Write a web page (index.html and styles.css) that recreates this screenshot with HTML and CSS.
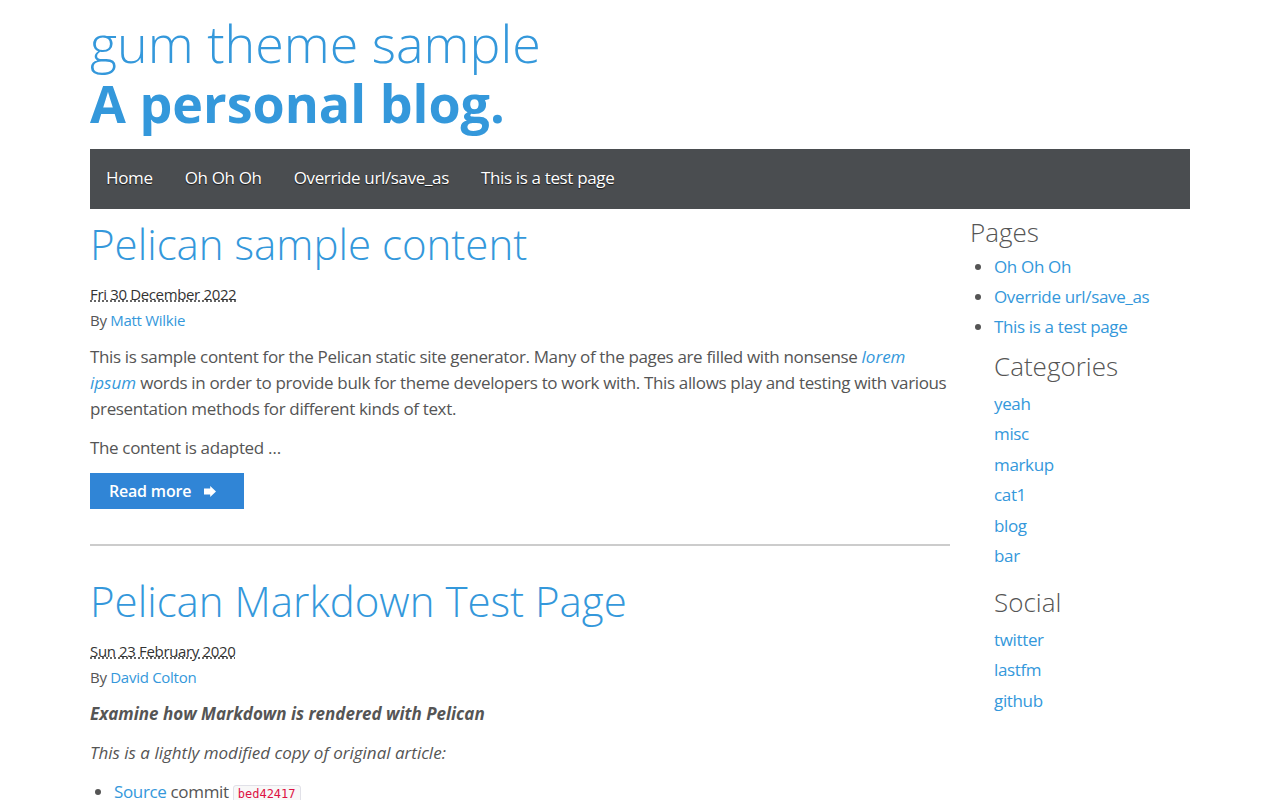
FILE: index.html
```html
<!DOCTYPE html>
<html>
<head>
<meta charset="utf-8">
<title>gum theme sample</title>
<link rel="stylesheet" href="styles.css">
</head>
<body>
<div class="container">
  <header class="site-header">
    <h1 class="site-title"><a href="#">gum theme sample</a></h1>
    <h2 class="site-tagline"><a href="#">A personal blog.</a></h2>
  </header>
  <nav class="navbar">
    <a href="#">Home</a>
    <a href="#">Oh Oh Oh</a>
    <a href="#">Override url/save_as</a>
    <a href="#">This is a test page</a>
  </nav>
  <div class="layout">
    <main class="main">
      <article class="post">
        <h2 class="post-title"><a href="#">Pelican sample content</a></h2>
        <div class="meta"><abbr title="2022-12-30">Fri 30 December 2022</abbr></div>
        <div class="byline">By <a href="#">Matt Wilkie</a></div>
        <p>This is sample content for the Pelican static site generator. Many of the pages are filled with nonsense <a href="#"><em>lorem ipsum</em></a> words in order to provide bulk for theme developers to work with. This allows play and testing with various presentation methods for different kinds of text.</p>
        <p>The content is adapted …</p>
        <a class="btn" href="#">Read more <svg class="arrow" width="12" height="11" viewBox="0 0 12 11"><path d="M0 2.5h6.2V0L12 5.5 6.2 11V8.5H0z" fill="#fff"/></svg></a>
      </article>
      <hr class="sep">
      <article class="post">
        <h2 class="post-title"><a href="#">Pelican Markdown Test Page</a></h2>
        <div class="meta"><abbr title="2020-02-23">Sun 23 February 2020</abbr></div>
        <div class="byline">By <a href="#">David Colton</a></div>
        <p><strong><em>Examine how Markdown is rendered with Pelican</em></strong></p>
        <p><em>This is a lightly modified copy of original article:</em></p>
        <ul class="bullets">
          <li><a href="#">Source</a> commit <code>bed42417</code></li>
        </ul>
      </article>
    </main>
    <aside class="sidebar">
      <h3 class="side-head side-first">Pages</h3>
      <ul class="side-list">
        <li><a href="#">Oh Oh Oh</a></li>
        <li><a href="#">Override url/save_as</a></li>
        <li><a href="#">This is a test page</a></li>
      </ul>
      <div class="side-block">
        <h3 class="side-head">Categories</h3>
        <ul class="plain">
          <li><a href="#">yeah</a></li>
          <li><a href="#">misc</a></li>
          <li><a href="#">markup</a></li>
          <li><a href="#">cat1</a></li>
          <li><a href="#">blog</a></li>
          <li><a href="#">bar</a></li>
        </ul>
        <h3 class="side-head">Social</h3>
        <ul class="plain">
          <li><a href="#">twitter</a></li>
          <li><a href="#">lastfm</a></li>
          <li><a href="#">github</a></li>
        </ul>
      </div>
    </aside>
  </div>
</div>
</body>
</html>
```

FILE: styles.css
```css
html, body {
  margin: 0;
  padding: 0;
}
body {
  font-family: "Open Sans", "Liberation Sans", sans-serif;
  color: #555;
  background: #fff;
  font-size: 17px;
  letter-spacing: -0.35px;
}
a {
  color: #3498db;
  text-decoration: none;
}
em {
  letter-spacing: 0;
}
.container {
  width: 1100px;
  margin: 0 auto;
}
.site-header {
  padding-top: 13px;
}
.site-title {
  margin: 0;
  font-size: 52px;
  font-weight: 300;
  line-height: 60px;
  letter-spacing: 0;
}
.site-tagline {
  margin: 0;
  font-size: 52px;
  font-weight: 700;
  line-height: 60px;
  letter-spacing: 0;
}
.navbar {
  margin-top: 16px;
  height: 60px;
  box-sizing: border-box;
  padding-bottom: 3px;
  background: #4a4d50;
  display: flex;
  align-items: center;
}
.navbar a {
  color: #fff;
  padding: 0 16px;
  font-size: 17px;
  text-shadow: 0 1px 1px rgba(0,0,0,0.7);
}
.layout {
  display: flex;
  gap: 20px;
}
.main {
  width: 860px;
}
.sidebar {
  width: 220px;
}
.post-title {
  margin: 9px 0 11px;
  font-size: 42px;
  font-weight: 300;
  line-height: 52px;
  letter-spacing: 0;
}
.meta {
  font-size: 15px;
  color: #333;
  line-height: 26px;
}
abbr {
  text-decoration: underline dotted;
}
.byline {
  font-size: 15px;
  line-height: 26px;
  color: #555;
  letter-spacing: -0.28px;
}
p {
  margin: 11px 0 13px;
  line-height: 26px;
}
.btn {
  display: flex;
  width: fit-content;
  box-sizing: border-box;
  align-items: center;
  gap: 13px;
  margin-top: -1px;
  background: #3085d6;
  color: #fff;
  height: 36px;
  padding: 0 28px 0 19px;
  font-weight: 600;
  font-size: 16px;
  letter-spacing: -0.2px;
}
.sep {
  border: 0;
  border-top: 2px solid #ccc;
  margin: 35px 0 29px;
}
.bullets {
  margin: 0;
  padding-left: 24px;
  line-height: 26px;
}
code {
  font-family: "DejaVu Sans Mono", monospace;
  font-size: 12px;
  letter-spacing: 0;
  color: #dd1144;
  background: #f8f8f8;
  border: 1px solid #e1e1e8;
  border-radius: 3px;
  padding: 1px 4px;
}
.side-head {
  margin: 0;
  font-size: 26px;
  font-weight: 300;
  line-height: 36px;
  color: #555;
  letter-spacing: 0;
}
.side-first {
  margin-top: 5px;
}
.side-list {
  margin: 2px 0 6px;
  padding-left: 24px;
  line-height: 30px;
}
.side-block {
  padding-left: 24px;
}
.plain {
  list-style: none;
  margin: 5px 0 12px;
  padding: 0;
  line-height: 30.45px;
}
```
